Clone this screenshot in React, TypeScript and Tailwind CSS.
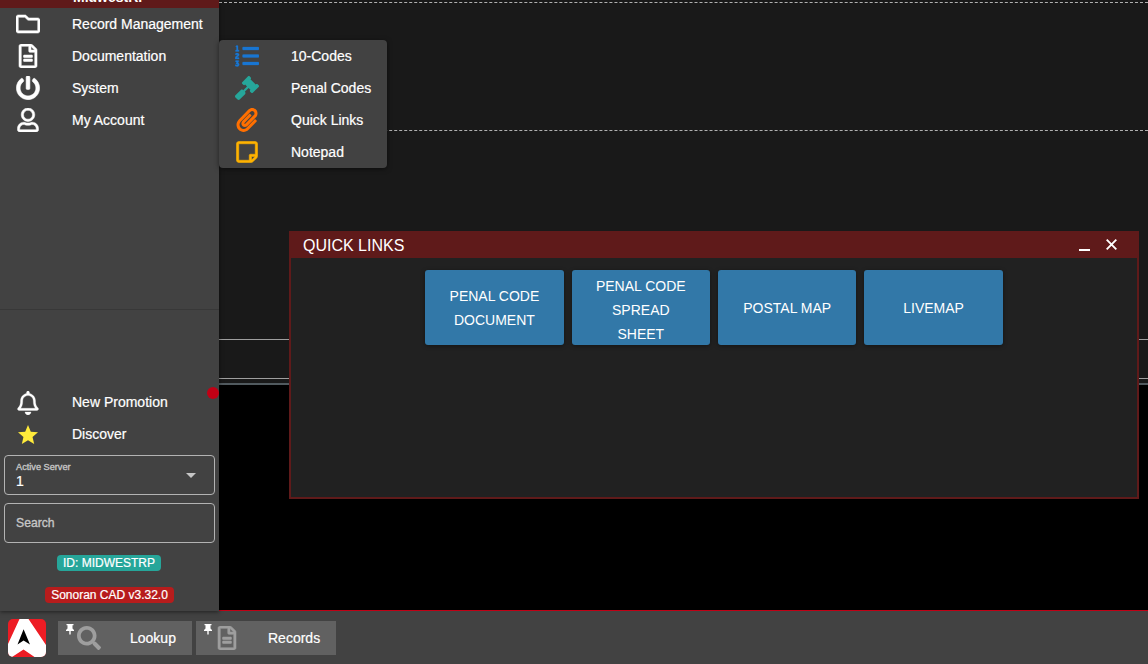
import type { ReactNode } from "react";
import {
  FaRegFolder,
  FaRegFileAlt,
  FaPowerOff,
  FaRegUser,
  FaListOl,
  FaGavel,
  FaPaperclip,
  FaRegStickyNote,
  FaRegBell,
  FaSearch,
} from "react-icons/fa";
import { MdStar, MdArrowDropDown } from "react-icons/md";

function NavItem({ icon, label }: { icon: ReactNode; label: string }) {
  return (
    <div className="flex h-8 shrink-0 items-center pl-4 text-white">
      <span className="flex w-14 shrink-0 items-center">{icon}</span>
      <span className="whitespace-nowrap text-[14px] leading-5 [-webkit-text-stroke:0.2px]">{label}</span>
    </div>
  );
}

function Sidebar() {
  return (
    <aside className="relative z-10 flex h-[611px] w-[219px] shrink-0 flex-col bg-[#424242] shadow-[0_1px_4px_rgba(0,0,0,0.5)]">
      <div className="flex h-2 shrink-0 items-end overflow-hidden bg-[#5f1a1a] pl-[73px] text-[14px] font-bold leading-none text-white">
        <span className="pb-1">MidwestRP</span>
      </div>
      <nav className="flex h-[301px] shrink-0 flex-col">
        <NavItem icon={<FaRegFolder size={24} strokeWidth={12} />} label="Record Management" />
        <NavItem icon={<FaRegFileAlt size={24} strokeWidth={12} />} label="Documentation" />
        <NavItem icon={<FaPowerOff size={24} strokeWidth={12} />} label="System" />
        <NavItem icon={<FaRegUser size={24} strokeWidth={12} />} label="My Account" />
      </nav>
      <div className="h-px shrink-0 bg-[#383838]" />
      <div className="mt-[76px] flex flex-col">
        <div className="relative">
          <NavItem icon={<FaRegBell size={24} strokeWidth={6} className="relative top-px" />} label="New Promotion" />
          <span className="absolute right-0 top-[1px] size-3 rounded-full bg-[#c10015]" />
        </div>
        <NavItem icon={<MdStar size={24} color="#ffeb3b" className="relative top-px" />} label="Discover" />
      </div>
      <div className="mx-1 mt-[5px] flex h-10 shrink-0 items-center justify-between rounded border border-[#b3b3b3] pl-[11px] pr-[11px]">
        <div className="flex flex-col">
          <span className="pt-px text-[9.2px] leading-[11px] text-[#c6c6c6] [-webkit-text-stroke:0.35px]">
            Active Server
          </span>
          <span className="text-[14px] leading-4 text-white [-webkit-text-stroke:0.2px]">1</span>
        </div>
        <MdArrowDropDown size={24} color="#c6c6c6" />
      </div>
      <div className="mx-1 mt-2 flex h-10 shrink-0 items-center rounded border border-[#b3b3b3] pl-[11px] text-[12.2px] text-[#c6c6c6] [-webkit-text-stroke:0.35px]">
        Search
      </div>
      <div className="mt-3 flex flex-col items-center gap-4 text-[12px] leading-4 text-white [-webkit-text-stroke:0.2px]">
        <span className="mr-px rounded bg-[#26a69a] px-1.5">ID: MIDWESTRP</span>
        <span className="rounded bg-[#b71c1c] px-1.5">Sonoran CAD v3.32.0</span>
      </div>
    </aside>
  );
}

function FlyoutMenu() {
  return (
    <div className="absolute left-[219px] top-10 z-20 h-32 w-[168px] rounded-sm bg-[#424242] shadow-[0_1px_5px_rgba(0,0,0,0.5)]">
      <NavItem icon={<FaListOl size={24} color="#1976d2" strokeWidth={6} />} label="10-Codes" />
      <NavItem icon={<FaGavel size={24} color="#26a69a" />} label="Penal Codes" />
      <NavItem icon={<FaPaperclip size={24} color="#ff6f00" />} label="Quick Links" />
      <NavItem icon={<FaRegStickyNote size={24} color="#ffb300" strokeWidth={12} />} label="Notepad" />
    </div>
  );
}

const links = [
  { label: "PENAL CODE DOCUMENT", offset: "" },
  { label: "PENAL CODE SPREAD SHEET", offset: "pt-1" },
  { label: "POSTAL MAP", offset: "" },
  { label: "LIVEMAP", offset: "" },
];

function QuickLinksWindow() {
  return (
    <section className="absolute left-[289px] top-[231px] z-0 flex h-[268px] w-[850px] flex-col border-2 border-[#5f1a1a] bg-[#212121]">
      <header className="flex h-[25px] shrink-0 items-center justify-between bg-[#5f1a1a] pl-3 pr-5 text-white">
        <h1 className="text-[16px]">QUICK LINKS</h1>
        <div className="flex items-center gap-4">
          <span className="mt-2 h-0.5 w-[11px] bg-white" />
          <svg width="11" height="11" viewBox="0 0 11 11" className="-mt-0.5">
            <path d="M0.700 0.700L10.300 10.300M10.300 0.700L0.700 10.300" stroke="currentColor" strokeWidth="1.9" />
          </svg>
        </div>
      </header>
      <div className="flex justify-center gap-2 pt-3">
        {links.map(({ label, offset }) => (
          <div
            key={label}
            role="button"
            className={`flex h-[75px] w-[138.4px] items-center justify-center rounded-[3px] bg-[#3278a8] px-4 text-center text-[14px] leading-6 text-white shadow-[0_1px_4px_rgba(0,0,0,0.4)] ${offset}`}
          >
            {label}
          </div>
        ))}
      </div>
    </section>
  );
}

function Backdrop() {
  return (
    <div className="flex min-w-0 flex-1 flex-col bg-black">
      <div className="flex h-[383px] shrink-0 flex-col bg-[#191919]">
        <div className="h-[3px] shrink-0 border-b border-dashed border-[#b0b0b0]" />
        <div className="h-32 shrink-0 border-b border-dashed border-[#b0b0b0]" />
        <div className="h-[209px] shrink-0 border-b border-[#9e9e9e]" />
        <div className="h-[39px] shrink-0 border-b border-[#9e9e9e]" />
      </div>
      <div className="h-0.5 shrink-0 bg-[#515a5f]" />
      <div className="flex-1 border-b border-[#c10015]" />
    </div>
  );
}

function Task({ icon, label, className }: { icon: ReactNode; label: string; className: string }) {
  return (
    <div
      className={`relative flex h-[34px] items-center bg-[#616161] text-[14px] leading-5 text-white ${className}`}
    >
      <svg className="absolute left-2 top-[3px]" width="8" height="11" viewBox="0 0 8 11" fill="currentColor">
        <path d="M0.500 0H7.500V1.300H6.500V4.500L8 6V7H4.700V10L4 11L3.300 10V7H0V6L1.500 4.500V1.300H0.500Z" />
      </svg>
      <span className="flex w-[53px] text-[#9e9e9e]">{icon}</span>
      <span className="[-webkit-text-stroke:0.2px]">{label}</span>
    </div>
  );
}

function Taskbar() {
  return (
    <footer className="flex h-[53px] items-start gap-1 bg-[#424242] pl-2 pt-2">
      <svg width="38" height="38" viewBox="0 0 38 38" className="mr-2">
        <defs>
          <clipPath id="tile">
            <rect width="38" height="38" rx="5" />
          </clipPath>
        </defs>
        <g clipPath="url(#tile)">
          <rect width="38" height="38" fill="#ed1c24" />
          <path d="M11.500 0H20.500L38 26V38H26.500L15.500 30.500L4 38H0V25Z" fill="#fff" />
        </g>
        <path d="M15.600 10.300L22 25.500L15.600 21.500L9.500 25.500Z" fill="#000" />
      </svg>
      <Task icon={<FaSearch size={24} />} label="Lookup" className="mt-0.5 w-[134px] pl-[19px]" />
      <Task
        icon={<FaRegFileAlt size={24} strokeWidth={12} />}
        label="Records"
        className="mt-0.5 w-[140px] pl-[19px]"
      />
    </footer>
  );
}

export default function App() {
  return (
    <div className="relative h-[664px] w-[1148px] overflow-hidden bg-black font-['Liberation_Sans',Arial,sans-serif]">
      <div className="flex h-[611px]">
        <Sidebar />
        <Backdrop />
      </div>
      <QuickLinksWindow />
      <FlyoutMenu />
      <Taskbar />
    </div>
  );
}
